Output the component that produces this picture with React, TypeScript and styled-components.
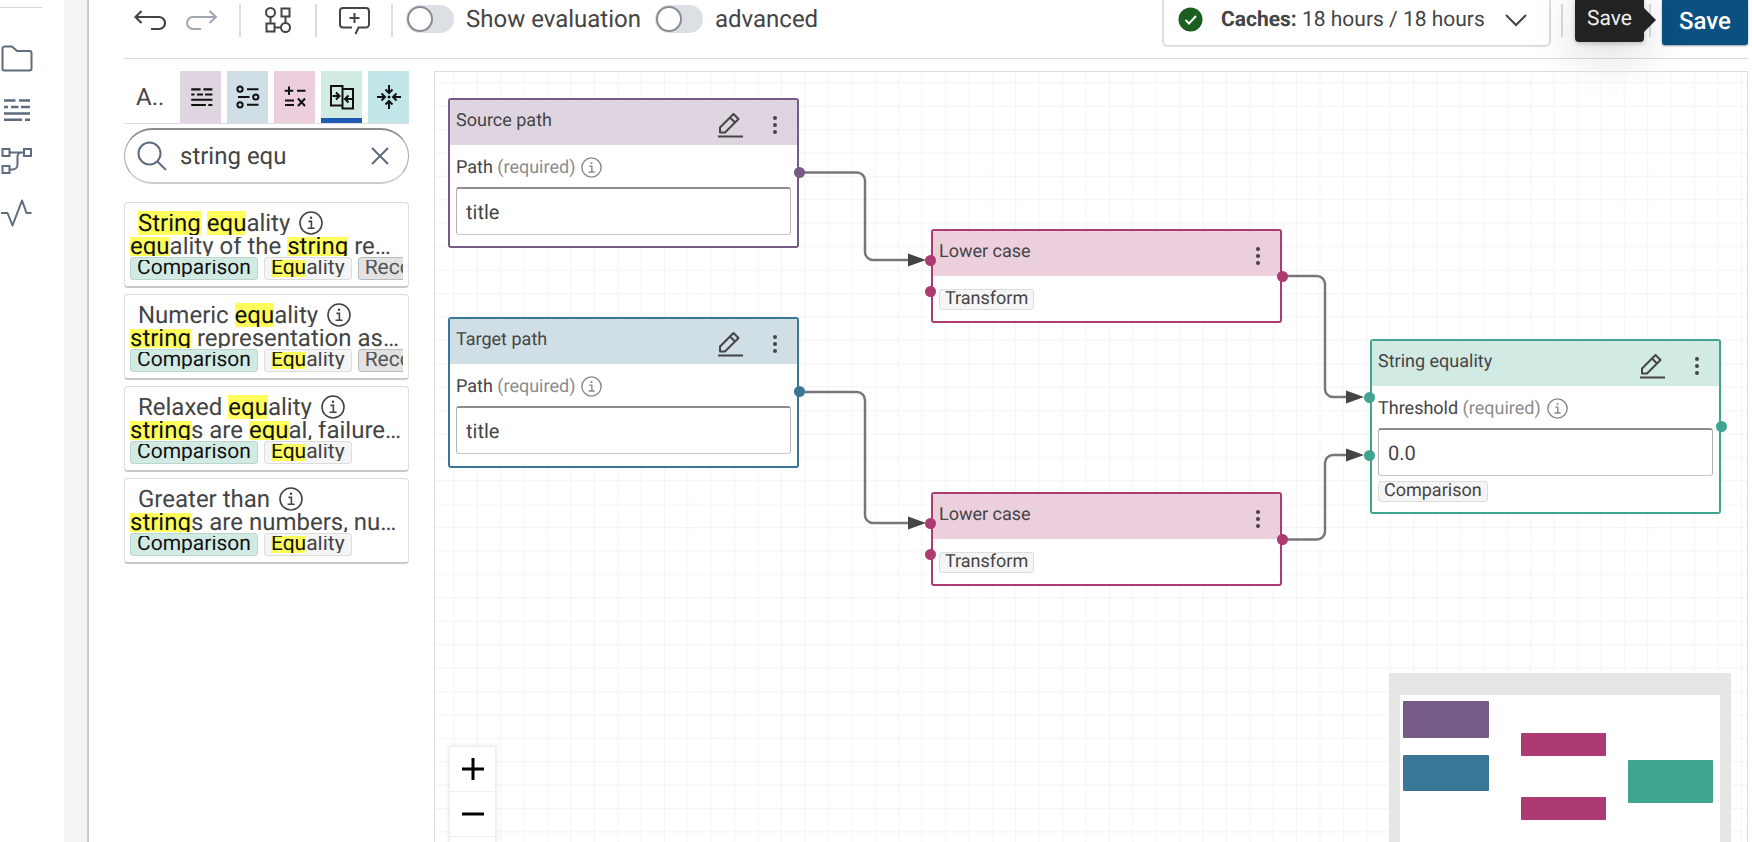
import React from "react";
import styled, { createGlobalStyle } from "styled-components";

const GlobalStyle = createGlobalStyle`
  *, *::before, *::after { box-sizing: border-box; }
  body { margin: 0; background: #fff; color: #444; font-family: Roboto, "Liberation Sans", sans-serif; text-rendering: geometricPrecision; }
  button, input { font-family: inherit; color: inherit; margin: 0; text-rendering: inherit; }
  button { border: 0; padding: 0; background: none; cursor: pointer; }
  mark { background: #ffff5c; color: #111; }
`;

const Shell = styled.div`
  display: flex;
  height: 100vh;
  overflow: hidden;
`;

const SideNav = styled.nav`
  width: 64px;
  flex: none;
  padding-top: 7px;
`;

const NavRule = styled.hr`
  width: 42px;
  height: 1px;
  margin: 0 0 25px;
  border: 0;
  background: #d4d4d4;
`;

const NavLink = styled.a`
  display: flex;
  align-items: center;
  height: 51px;
  color: #5f6b7f;
`;

const Gutter = styled.div`
  width: 25px;
  flex: none;
  background: #f4f4f4;
  border-right: 2px solid #ccc;
`;

const Main = styled.main`
  flex: 1;
  min-width: 0;
  display: flex;
  flex-direction: column;
  padding: 0 4px 0 35px;
`;

const Toolbar = styled.header`
  display: flex;
  align-items: flex-start;
  justify-content: space-between;
  height: 59px;
  flex: none;
  border-bottom: 1px solid #ddd;
`;

const ToolGroup = styled.div`
  display: flex;
  align-items: center;
  height: 40px;
`;

const ToolButton = styled.button`
  width: 52px;
  height: 40px;
  display: flex;
  align-items: center;
  justify-content: center;
  color: #444;
  &:disabled { color: #a0a7b3; }
`;

const Separator = styled.span`
  width: 2px;
  height: 33px;
  margin: 0 11px;
  background: #dcdcdc;
`;

const SwitchLabel = styled.label`
  display: flex;
  align-items: center;
  gap: 12px;
  height: 38px;
  margin: 0 12px 2px 2px;
  font-size: 24px;
  line-height: 32px;
`;

const Switch = styled.input`
  appearance: none;
  width: 48px;
  height: 28px;
  padding: 1px;
  border-radius: 14px;
  background: #dce0e5;
  &::before {
    content: "";
    display: block;
    width: 26px;
    height: 26px;
    border: 2px solid #888b90;
    border-radius: 50%;
    background: #fff;
  }
`;

const ToolEnd = styled.div`
  display: flex;
  align-items: flex-start;
`;

const CacheButton = styled.button`
  display: flex;
  align-items: center;
  width: 389px;
  height: 47px;
  padding: 0 22px 6px 14px;
  border: 2px solid #ddd;
  border-top: 0;
  border-radius: 0 0 6px 6px;
  font-size: 21px;
  white-space: nowrap;
`;

const CacheText = styled.span`
  flex: 1;
  margin-left: 18px;
  text-align: left;
`;

const EndSeparator = styled(Separator)`
  margin: 4px 0 0 10px;
`;

const SaveArea = styled.div`
  position: relative;
  display: flex;
  margin-left: 86px;
`;

const SaveSeparator = styled(Separator)`
  margin: 4px 11px 0 0;
`;

const SaveButton = styled.button`
  width: 86px;
  height: 45px;
  padding-bottom: 4px;
  border-radius: 0 0 3px 3px;
  background: #0a5080;
  color: #fff;
  font-size: 24px;
  font-weight: 500;
  box-shadow: 0 1px 2px rgba(0, 0, 0, 0.4);
`;

const Tooltip = styled.div`
  position: absolute;
  top: 0;
  right: 104px;
  width: 69px;
  height: 42px;
  padding-top: 6px;
  border-radius: 0 0 4px 4px;
  background: #222;
  color: #eee;
  font-size: 21px;
  line-height: 26px;
  text-align: center;
  box-shadow: 0 8px 48px rgba(16, 22, 26, 0.2), 0 2px 4px rgba(16, 22, 26, 0.2);
  &::after {
    content: "";
    position: absolute;
    left: 100%;
    top: 8px;
    border: 12px solid transparent;
    border-left-color: #222;
    border-right-width: 0;
  }
`;

const Workspace = styled.div`
  flex: 1;
  min-height: 0;
  display: flex;
  gap: 25px;
  padding-top: 12px;
`;

const Palette = styled.aside`
  width: 285px;
  flex: none;
`;

const Tabs = styled.div`
  display: flex;
  gap: 6px;
  border-bottom: 1px solid #ddd;
`;

const AllTab = styled.button`
  width: 50px;
  height: 52px;
  padding-left: 12px;
  font-size: 24px;
  text-align: left;
`;

const Tab = styled.button<{ $tint: string; $active?: boolean }>`
  width: 41px;
  height: 52px;
  display: flex;
  align-items: center;
  justify-content: center;
  color: #111;
  background: ${(p) => p.$tint};
  box-shadow: ${(p) => (p.$active ? "inset 0 -5px #1e5cb3" : "none")};
`;

const SearchBox = styled.div`
  display: flex;
  align-items: center;
  height: 56px;
  margin-top: 4px;
  padding: 0 12px;
  border: 1px solid #aaa;
  border-top: 2px solid #8c8c8c;
  border-bottom: 2px solid #ccc;
  border-radius: 28px;
  color: #5f6b7f;
`;

const SearchInput = styled.input`
  flex: 1;
  min-width: 0;
  margin-left: 13px;
  padding: 0;
  border: 0;
  outline: 0;
  background: none;
  color: #444;
  font-size: 24px;
  &::-webkit-search-cancel-button { display: none; }
`;

const ClearButton = styled.button`
  width: 32px;
  height: 32px;
  display: flex;
  align-items: center;
  justify-content: center;
  color: #5f6b7f;
`;

const CardList = styled.ul`
  display: flex;
  flex-direction: column;
  gap: 6px;
  margin: 18px 0 0;
  padding: 0;
  list-style: none;
`;

const Card = styled.li`
  height: 86px;
  padding: 8px 5px 0;
  border: 1px solid #ddd;
  border-bottom: 2px solid #c8c8c8;
  border-radius: 4px;
  white-space: nowrap;
`;

const CardTitle = styled.div`
  display: flex;
  align-items: center;
  gap: 9px;
  height: 24px;
  padding-left: 8px;
  font-size: 24px;
  line-height: 24px;
`;

const CardTitleText = styled.span`
  height: 24px;
  overflow: hidden;
`;

const CardText = styled.div`
  height: 19px;
  margin: 2px 0 1px;
  overflow: hidden;
  font-size: 24px;
  line-height: 19px;
`;

const TagRow = styled.div`
  display: flex;
  gap: 6px;
  overflow: hidden;
`;

type Tone = "mint" | "plain" | "grey";
const tones: Record<Tone, string> = {
  mint: "background: #d1ebe4; border-color: #bcd5cf; color: #111;",
  plain: "background: #f5f5f5; border-color: #ddd; color: #444;",
  grey: "background: #e2e2e2; border-color: #bbb; color: #555;",
};

const Tag = styled.span<{ $tone: Tone }>`
  flex: none;
  height: 23px;
  padding: 2px 6px;
  border: 1px solid;
  border-radius: 3px;
  font-size: 21px;
  ${(p) => tones[p.$tone]}
`;

const TagText = styled.span`
  display: block;
  height: 17px;
  line-height: 17px;
  overflow: hidden;
`;

const Canvas = styled.section`
  position: relative;
  flex: 1;
  min-width: 0;
  overflow: hidden;
  border: 1px solid #ddd;
  border-bottom: 0;
`;

const Drawing = styled.svg`
  position: absolute;
  inset: 0;
  width: 100%;
  height: 100%;
`;

const NodeBox = styled.article<{ $x: number; $y: number; $h: number; $color: string }>`
  position: absolute;
  left: ${(p) => p.$x}px;
  top: ${(p) => p.$y}px;
  width: 351px;
  height: ${(p) => p.$h}px;
  border: 2px solid ${(p) => p.$color};
  border-radius: 3px;
  background: #fff;
  font-size: 18px;
`;

const NodeHeader = styled.div<{ $tint: string }>`
  display: flex;
  align-items: center;
  height: 45px;
  padding: 0 2px 0 6px;
  background: ${(p) => p.$tint};
`;

const NodeTitle = styled.span`
  flex: 1;
  padding-bottom: 4px;
`;

const NodeButton = styled.button`
  width: 40px;
  height: 40px;
  margin-left: 5px;
  padding-top: 4px;
  display: flex;
  align-items: center;
  justify-content: center;
`;

const NodeBody = styled.div`
  padding: 8px 6px 0;
`;

const FieldLabel = styled.label`
  display: flex;
  align-items: center;
  height: 28px;
  gap: 6px;
`;

const Required = styled.span`
  color: #8c8c8c;
`;

const FieldInfo = styled.span`
  display: flex;
  color: #888;
`;

const FieldInput = styled.input`
  display: block;
  width: 100%;
  height: 48px;
  margin-top: 6px;
  padding: 0 9px;
  border: 1px solid #b4b4b4;
  border-top: 2px solid #8c8c8c;
  border-bottom-color: #c8c8c8;
  border-radius: 3px;
  outline: 0;
  font-size: 20px;
`;

const NodeTag = styled.span`
  display: inline-block;
  height: 21px;
  margin-top: 5px;
  padding: 0 5px;
  border: 1px solid #ddd;
  border-radius: 3px;
  background: #f5f5f5;
  line-height: 18px;
`;

const Port = styled.span<{ $side: "left" | "right"; $y: number; $color: string }>`
  position: absolute;
  ${(p) => p.$side}: -8px;
  top: ${(p) => p.$y}px;
  width: 11px;
  height: 11px;
  border-radius: 50%;
  background: ${(p) => p.$color};
`;

const ZoomControls = styled.div`
  position: absolute;
  left: 15px;
  bottom: -40px;
  width: 45px;
  background: #fff;
  box-shadow: 0 0 3px 2px rgba(0, 0, 0, 0.08);
`;

const ZoomButton = styled.button`
  display: flex;
  align-items: center;
  justify-content: center;
  width: 45px;
  height: 45px;
  border-bottom: 1px solid #eee;
  color: #000;
`;

const MiniMap = styled.svg`
  position: absolute;
  right: 16px;
  bottom: 0;
  width: 342px;
  height: 169px;
`;

const Svg = ({ size, w = 2, children }: { size: number; w?: number; children: React.ReactNode }) => (
  <svg width={size} height={size} viewBox={`0 0 ${size} ${size}`} fill="none" stroke="currentColor" strokeWidth={w} aria-hidden="true">
    {children}
  </svg>
);

const InfoIcon = ({ size }: { size: number }) => (
  <svg width={size} height={size} viewBox="0 0 24 24" fill="none" stroke="currentColor" strokeWidth="1.6" aria-hidden="true">
    <circle cx="12" cy="12" r="11" />
    <path d="M9.4 10.4h3v6.8M8.6 17.2h7" />
    <circle cx="12" cy="6.8" r="1.2" fill="currentColor" stroke="none" />
  </svg>
);

const LinesIcon = ({ size }: { size: number }) => (
  <svg width={size} height={size} viewBox="0 0 32 32" fill="none" stroke="currentColor" strokeWidth="2.500" aria-hidden="true">
    <path d="M4 6.600h11.500m3.500 0h11M4 13h4m3 0h7.500m2.500 0h9M4 19.400h26M4 25.800h18m3 0h5" />
  </svg>
);

const PencilIcon = () => (
  <Svg size={28} w={2}>
    <path d="M2 25.500h25" />
    <path d="M4 21.500v-5L17.500 3l5 5L9 21.500zM14 6.500l5 5" strokeLinejoin="round" />
  </Svg>
);

const DotsIcon = () => (
  <Svg size={20}>
    <g fill="currentColor" stroke="none">
      <circle cx="10" cy="3" r="2" />
      <circle cx="10" cy="10" r="2" />
      <circle cx="10" cy="17" r="2" />
    </g>
  </Svg>
);

const colors = {
  purple: { line: "#755b86", tint: "#ded5e0" },
  blue: { line: "#3a7796", tint: "#d0dee5" },
  pink: { line: "#ac3a73", tint: "#ebcfdd" },
  green: { line: "#40a590", tint: "#d1eae4" },
};

type Palettes = keyof typeof colors;

interface RuleNodeProps {
  id: string;
  title: string;
  x: number;
  y: number;
  h: number;
  color: Palettes;
  field?: { label: string; value: string };
  tag?: string;
  inputs?: number[];
  output: number;
}

const RuleNode = ({ id, title, x, y, h, color, field, tag, inputs = [], output }: RuleNodeProps) => {
  const { line, tint } = colors[color];
  return (
    <NodeBox $x={x} $y={y} $h={h} $color={line}>
      <NodeHeader $tint={tint}>
        <NodeTitle>{title}</NodeTitle>
        {field && <NodeButton aria-label="Edit"><PencilIcon /></NodeButton>}
        <NodeButton aria-label="More options"><DotsIcon /></NodeButton>
      </NodeHeader>
      <NodeBody>
        {field && (
          <>
            <FieldLabel htmlFor={id}>
              <span>{field.label} <Required>(required)</Required></span>
              <FieldInfo><InfoIcon size={21} /></FieldInfo>
            </FieldLabel>
            <FieldInput id={id} defaultValue={field.value} />
          </>
        )}
        {tag && <NodeTag>{tag}</NodeTag>}
      </NodeBody>
      {inputs.map((p) => <Port key={p} $side="left" $y={p} $color={line} />)}
      <Port $side="right" $y={output} $color={line} />
    </NodeBox>
  );
};

const query = /(string|equ)/i;
const Highlight = ({ text }: { text: string }) => (
  <>{text.split(query).map((part, i) => (query.test(part) ? <mark key={i}>{part}</mark> : part))}</>
);

const operators: { title: string; text: string; tags: [string, Tone][] }[] = [
  { title: "String equality", text: "equality of the string re…", tags: [["Comparison", "mint"], ["Equality", "plain"], ["Recommended", "grey"]] },
  { title: "Numeric equality", text: "string representation as…", tags: [["Comparison", "mint"], ["Equality", "plain"], ["Recommended", "grey"]] },
  { title: "Relaxed equality", text: "strings are equal, failure…", tags: [["Comparison", "mint"], ["Equality", "plain"]] },
  { title: "Greater than", text: "strings are numbers, nu…", tags: [["Comparison", "mint"], ["Equality", "plain"]] },
];

const edges = [
  "M364 100.500H422a8 8 0 0 1 8 8V180a8 8 0 0 0 8 8H480",
  "M364 320H422a8 8 0 0 1 8 8V443a8 8 0 0 0 8 8H480",
  "M847 204H882a8 8 0 0 1 8 8V317a8 8 0 0 0 8 8H918",
  "M847 467.500H882a8 8 0 0 0 8-8V391a8 8 0 0 1 8-8H918",
];

export default function App() {
  return (
    <Shell>
      <GlobalStyle />
      <SideNav aria-label="Main">
        <NavRule />
        <NavLink href="#projects" aria-label="Projects">
          <Svg size={33}><path d="M2.500 6.500a2 2 0 0 1 2-2h7.500l5 4.500h12.500a2 2 0 0 1 2 2v15.500a2 2 0 0 1-2 2h-25a2 2 0 0 1-2-2z" /></Svg>
        </NavLink>
        <NavLink href="#datasets" aria-label="Datasets"><LinesIcon size={32} /></NavLink>
        <NavLink href="#workflows" aria-label="Workflows">
          <Svg size={33}>
            <path d="M2.500 5h7v7h-7zM24 5h7v7h-7zM2.500 22h7v7h-7zM9.500 8.500h14.500M9.500 25.500h3a5 5 0 0 0 5-5v-8a4 4 0 0 1 4-4" />
          </Svg>
        </NavLink>
        <NavLink href="#activities" aria-label="Activities">
          <Svg size={33}><path d="M1 18h6.500l5 12.500 9.500-25 4.500 12.500h5" strokeLinejoin="round" /></Svg>
        </NavLink>
      </SideNav>
      <Gutter />
      <Main>
        <Toolbar>
          <ToolGroup>
            <ToolButton aria-label="Undo">
              <Svg size={32} w={2.2}><path d="M7.500 7L1.500 13l6 6M1.500 13h23.500a6 6 0 0 1 0 12H17" /></Svg>
            </ToolButton>
            <ToolButton aria-label="Redo" disabled>
              <Svg size={32}><path d="M23.500 7l6.500 6-6.500 6M30 13H7a6 6 0 0 0 0 12H15" /></Svg>
            </ToolButton>
            <Separator />
            <ToolButton aria-label="Auto layout">
              <Svg size={28}>
                <circle cx="6.500" cy="6.500" r="4.500" />
                <circle cx="21.500" cy="21.500" r="4.500" />
                <path d="M17.500 2.500h8v8h-8zM2.500 17.500h8v8h-8zM6.500 11v6.500M21.500 10.500V17M10.500 21.500H17" />
              </Svg>
            </ToolButton>
            <Separator />
            <ToolButton aria-label="Add comment">
              <Svg size={32}>
                <path d="M14 23.500H5a3 3 0 0 1-3-3V7a3 3 0 0 1 3-3h23a3 3 0 0 1 3 3v13.500a3 3 0 0 1-3 3h-7.500L17.500 30M16.500 9v10M11.500 14h10" />
              </Svg>
            </ToolButton>
            <Separator />
            <SwitchLabel><Switch type="checkbox" role="switch" />Show evaluation</SwitchLabel>
            <SwitchLabel><Switch type="checkbox" role="switch" />advanced</SwitchLabel>
          </ToolGroup>
          <ToolEnd>
            <CacheButton>
              <Svg size={25}>
                <circle cx="12.500" cy="12.500" r="12" fill="#1b5e20" stroke="none" />
                <path d="M7.500 13l3.500 3.500L18 9" stroke="#fff" />
              </Svg>
              <CacheText><b>Caches:</b> 18 hours / 18 hours</CacheText>
              <Svg size={22}><path d="M1 6l10 10L21 6" /></Svg>
            </CacheButton>
            <EndSeparator />
            <SaveArea>
              <SaveSeparator />
              <Tooltip role="tooltip">Save</Tooltip>
              <SaveButton>Save</SaveButton>
            </SaveArea>
          </ToolEnd>
        </Toolbar>
        <Workspace>
          <Palette>
            <Tabs role="tablist">
              <AllTab role="tab">A..</AllTab>
              <Tab role="tab" aria-label="Source paths" $tint={colors.purple.tint}><LinesIcon size={26} /></Tab>
              <Tab role="tab" aria-label="Target paths" $tint={colors.blue.tint}>
                <Svg size={24}>
                  <circle cx="4" cy="4.200" r="2.600" /><circle cx="19.800" cy="12" r="2.600" /><circle cx="4" cy="19.800" r="2.600" />
                  <path d="M11 4.200h11.500M2 12h11.500M11 19.800h11.500" />
                </Svg>
              </Tab>
              <Tab role="tab" aria-label="Transform" $tint={colors.pink.tint}>
                <Svg size={24}><path d="M6 1.500v8.500M1.700 5.800h8.600M14 5.800h8.500M2 15.500h9M2 20h9M15 13.500l7 7.500M22 13.500l-7 7.500" /></Svg>
              </Tab>
              <Tab role="tab" aria-label="Comparison" aria-selected $tint={colors.green.tint} $active>
                <Svg size={26}>
                  <path d="M2 2h11.500v19.500H2zM13.500 5h10.500v19.500H13.500v-3M3.500 12h7M7 8.500l3.500 3.500L7 15.500M23 15h-6.500M19.500 11.500L16 15l3.500 3.500" />
                </Svg>
              </Tab>
              <Tab role="tab" aria-label="Aggregation" $tint="#c3e6ea">
                <Svg size={26}>
                  <path d="M13 1v7.500M9.500 5.500L13 9l3.500-3.500M13 25v-7.500M9.500 20.500L13 17l3.500 3.500M1 13h7.500M5.500 9.500L9 13l-3.500 3.500M25 13h-7.500M20.500 9.500L17 13l3.500 3.500" />
                  <circle cx="13" cy="13" r="1.500" fill="currentColor" stroke="none" />
                </Svg>
              </Tab>
            </Tabs>
            <SearchBox>
              <Svg size={30}><circle cx="12.500" cy="12.500" r="11" /><path d="M20.500 20.500L29 29" /></Svg>
              <SearchInput type="search" aria-label="Search operators" defaultValue="string equ" />
              <ClearButton aria-label="Clear search"><Svg size={18}><path d="M1 1l16 16M17 1L1 17" /></Svg></ClearButton>
            </SearchBox>
            <CardList>
              {operators.map((op) => (
                <Card key={op.title}>
                  <CardTitle><CardTitleText><Highlight text={op.title} /></CardTitleText><InfoIcon size={24} /></CardTitle>
                  <CardText><Highlight text={op.text} /></CardText>
                  <TagRow>
                    {op.tags.map(([label, tone]) => (
                      <Tag key={label} $tone={tone}><TagText><Highlight text={label} /></TagText></Tag>
                    ))}
                  </TagRow>
                </Card>
              ))}
            </CardList>
          </Palette>
          <Canvas aria-label="Linking rule">
            <Drawing aria-hidden="true">
              <defs>
                <pattern id="grid" x="18.300" y="10.200" width="23.410" height="23.410" patternUnits="userSpaceOnUse">
                  <path d="M0 .5H23.410M.5 0V23.410" stroke="#f5f5f5" strokeWidth="1.200" />
                </pattern>
                <marker id="arrow" markerUnits="userSpaceOnUse" markerWidth="18" markerHeight="14" refX="7" refY="7">
                  <path d="M0 .5L18 7L0 13.500z" fill="#444" />
                </marker>
              </defs>
              <rect width="100%" height="100%" fill="url(#grid)" />
              {edges.map((d) => <path key={d} d={d} fill="none" stroke="#777" strokeWidth="2.500" markerEnd="url(#arrow)" />)}
            </Drawing>
            <RuleNode id="source" title="Source path" x={13} y={26} h={150} color="purple" field={{ label: "Path", value: "title" }} output={67} />
            <RuleNode id="target" title="Target path" x={13} y={245} h={151} color="blue" field={{ label: "Path", value: "title" }} output={67} />
            <RuleNode id="lower-1" title="Lower case" x={496} y={157} h={94} color="pink" tag="Transform" inputs={[24, 55]} output={40} />
            <RuleNode id="lower-2" title="Lower case" x={496} y={420} h={94} color="pink" tag="Transform" inputs={[24, 55]} output={40} />
            <RuleNode id="equality" title="String equality" x={935} y={267} h={175} color="green" field={{ label: "Threshold", value: "0.0" }} tag="Comparison" inputs={[51, 109]} output={80} />
            <ZoomControls>
              <ZoomButton aria-label="Zoom in"><Svg size={22} w={3}><path d="M11 0v22M0 11h22" /></Svg></ZoomButton>
              <ZoomButton aria-label="Zoom out"><Svg size={22} w={3}><path d="M0 11h22" /></Svg></ZoomButton>
              <ZoomButton aria-label="Fit view"><Svg size={22}><path d="M1 7V1h6M15 1h6v6M21 15v6h-6M7 21H1v-6" /></Svg></ZoomButton>
            </ZoomControls>
            <MiniMap viewBox="0 0 342 169" aria-hidden="true">
              <rect width="342" height="169" fill="#e6e6e6" />
              <rect x="11" y="22" width="320" height="147" fill="#fff" />
              <rect x="14" y="28" width="86" height="37" rx="1" fill={colors.purple.line} />
              <rect x="14" y="82" width="86" height="36" rx="1" fill={colors.blue.line} />
              <rect x="132" y="60" width="85" height="23" rx="1" fill={colors.pink.line} />
              <rect x="132" y="124" width="85" height="23" rx="1" fill={colors.pink.line} />
              <rect x="239" y="87" width="85" height="43" rx="1" fill={colors.green.line} />
            </MiniMap>
          </Canvas>
        </Workspace>
      </Main>
    </Shell>
  );
}
